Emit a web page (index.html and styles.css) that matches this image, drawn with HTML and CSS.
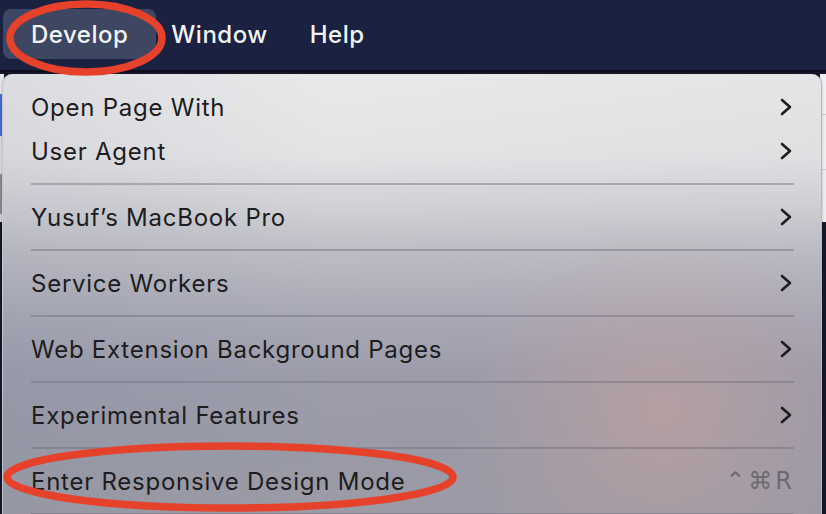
FILE: index.html
```html
<!DOCTYPE html>
<html>
<head>
<meta charset="utf-8">
<link rel="stylesheet" href="styles.css">
</head>
<body>
<div class="screen">
  <div class="menubar">
    <div class="mb-item active">Develop</div>
    <div class="mb-item window">Window</div>
    <div class="mb-item help">Help</div>
  </div>
  <div class="backdrop">
    <div class="page-left"></div>
    <div class="page-right"></div>
  </div>
  <div class="menu">
    <div class="row"><span>Open Page With</span><svg class="chev" viewBox="0 0 12 18"><path d="M2 2 L10 9 L2 16"/></svg></div>
    <div class="row"><span>User Agent</span><svg class="chev" viewBox="0 0 12 18"><path d="M2 2 L10 9 L2 16"/></svg></div>
    <div class="sep"></div>
    <div class="row"><span>Yusuf’s MacBook Pro</span><svg class="chev" viewBox="0 0 12 18"><path d="M2 2 L10 9 L2 16"/></svg></div>
    <div class="sep"></div>
    <div class="row"><span>Service Workers</span><svg class="chev" viewBox="0 0 12 18"><path d="M2 2 L10 9 L2 16"/></svg></div>
    <div class="sep"></div>
    <div class="row"><span>Web Extension Background Pages</span><svg class="chev" viewBox="0 0 12 18"><path d="M2 2 L10 9 L2 16"/></svg></div>
    <div class="sep"></div>
    <div class="row"><span>Experimental Features</span><svg class="chev" viewBox="0 0 12 18"><path d="M2 2 L10 9 L2 16"/></svg></div>
    <div class="sep"></div>
    <div class="row"><span>Enter Responsive Design Mode</span><span class="shortcut">⌃⌘R</span></div>
    <div class="sep"></div>
  </div>
  <svg class="annot" viewBox="0 0 826 514" width="826" height="514">
    <ellipse cx="86" cy="38" rx="76" ry="34"/>
    <ellipse cx="230" cy="477" rx="223" ry="31"/>
  </svg>
</div>
</body>
</html>
```

FILE: styles.css
```css
html, body {
  margin: 0;
  padding: 0;
  width: 826px;
  height: 514px;
  overflow: hidden;
  background: #15172a;
  font-family: Inter, "Noto Sans", "DejaVu Sans", sans-serif;
}

.screen {
  position: relative;
  width: 826px;
  height: 514px;
  overflow: hidden;
  background: #15172a;
}

.menubar {
  height: 72px;
  background: #1b2140;
  border-bottom: 2px solid #0c0e1c;
  display: flex;
  align-items: center;
  padding-left: 3px;
  box-sizing: border-box;
}

.mb-item {
  color: #f2f3f7;
  font-size: 24px;
  font-weight: 500;
  height: 50px;
  display: flex;
  align-items: center;
  margin-top: -2px;
  letter-spacing: 0.5px;
}

.mb-item.active {
  background: #3d4762;
  border-radius: 8px;
  padding: 0 28px 0 28px;
}

.mb-item.window {
  margin-left: 15px;
}

.mb-item.help {
  margin-left: 42px;
}

.backdrop {
  position: absolute;
  left: 0;
  top: 74px;
  width: 826px;
  height: 148px;
}

.page-left {
  position: absolute;
  left: 0;
  top: 0;
  width: 4px;
  height: 148px;
  background: linear-gradient(#e8e9ec 0 20px, #3a6fd8 20px 62px, #d9dade 62px 100px, #8a8a8e 100px 140px, #cfd0d3 140px);
}

.page-right {
  position: absolute;
  right: 0;
  top: 0;
  width: 6px;
  height: 148px;
  background: linear-gradient(#f0f0f2 0 40px, #c9c9cc 40px 41px, #eeeef0 41px 95px, #c9c9cc 95px 96px, #ececee 96px);
}

.menu {
  position: absolute;
  left: 2px;
  top: 74px;
  width: 820px;
  height: 460px;
  box-sizing: border-box;
  padding: 11px 0 0 0;
  border-radius: 10px 10px 0 0;
  border-left: 1px solid #c7c7cc;
  border-right: 1px solid #b9b9c0;
  box-shadow: 0 0 2px rgba(0,0,0,0.35);
  background:
    radial-gradient(ellipse 210px 190px at 660px 340px, rgba(198,162,158,0.6), rgba(198,162,158,0) 100%),
    linear-gradient(90deg, rgba(120,128,150,0.12), rgba(120,128,150,0) 40%, rgba(150,140,160,0.05)),
    linear-gradient(180deg, #e9e9eb 0px, #e4e4e6 80px, #d2d2d7 130px, #bcbcc4 180px, #a9a9b6 240px, #9c9cab 300px, #9a9aa7 380px, #9c9ba6 460px);
}

.row {
  height: 44px;
  display: flex;
  align-items: center;
  justify-content: space-between;
  padding: 0 29px 0 28px;
  color: #1d1d20;
  font-size: 24px;
  letter-spacing: 0.75px;
}

.chev {
  width: 12px;
  height: 18px;
  fill: none;
  stroke: #1d1d20;
  stroke-width: 2.6;
  stroke-linecap: round;
  stroke-linejoin: round;
}

.shortcut {
  color: #6b6a72;
  font-family: "DejaVu Sans", sans-serif;
  font-size: 24px;
  letter-spacing: 3px;
  margin-right: -3px;
}

.sep {
  height: 2px;
  margin: 10px 27px 10px 28px;
  background: rgba(110,110,125,0.45);
}

.annot {
  position: absolute;
  left: 0;
  top: 0;
  pointer-events: none;
}

.annot ellipse {
  fill: none;
  stroke: #e6412a;
  stroke-width: 7.5;
}
```
